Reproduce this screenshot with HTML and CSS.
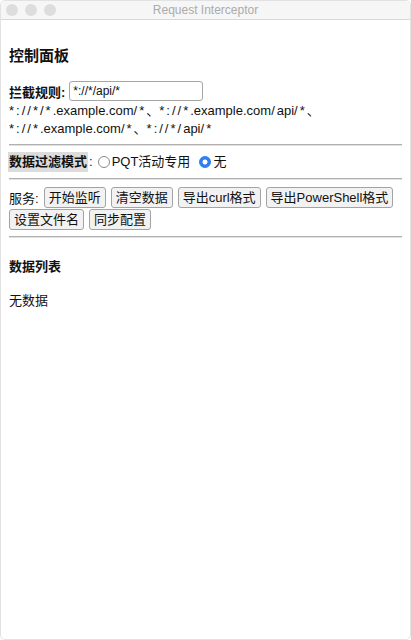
FILE: index.html
```html
<!DOCTYPE html>
<html lang="zh">
<head>
<meta charset="utf-8">
<title>Request Interceptor</title>
<link rel="stylesheet" href="styles.css">
</head>
<body>
<div class="window">
  <div class="titlebar">
    <div class="lights"><span class="light"></span><span class="light"></span><span class="light"></span></div>
    <div class="title">Request Interceptor</div>
  </div>
  <div class="content">
    <h3 class="heading">控制面板</h3>
    <div class="rule-row">
      <label class="bold">拦截规则:</label>
      <input class="rule-input" type="text" value="*://*/api/*">
    </div>
    <div class="hint"><span class="sym">*://*/*</span>.example.com<span class="sym">/*</span>、<span class="sym">*://*</span>.example.com<span class="sym">/</span>api<span class="sym">/*</span>、<br><span class="sym">*://*</span>.example.com<span class="sym">/*</span>、<span class="sym">*://*/</span>api<span class="sym">/*</span></div>
    <hr class="sep">
    <div class="filter-row">
      <span class="bold selected">数据过滤模式</span><span class="colon">:</span>
      <label class="radio-label"><span class="radio"></span>PQT活动专用</label>
      <label class="radio-label"><span class="radio checked"></span>无</label>
    </div>
    <hr class="sep">
    <div class="service-row">
      <span class="label">服务:</span>
      <button class="btn">开始监听</button>
      <button class="btn">清空数据</button>
      <button class="btn">导出curl格式</button>
      <button class="btn">导出PowerShell格式</button>
      <button class="btn">设置文件名</button>
      <button class="btn">同步配置</button>
    </div>
    <hr class="sep">
    <h4 class="subheading">数据列表</h4>
    <p class="empty">无数据</p>
  </div>
</div>
</body>
</html>
```

FILE: styles.css
```css
html, body {
  margin: 0;
  padding: 0;
  background: #ffffff;
}
body {
  width: 411px;
  height: 640px;
  overflow: hidden;
  font-family: "Liberation Sans", "Noto Sans CJK SC", sans-serif;
  font-size: 13px;
  color: #111;
}
.window {
  width: 411px;
  height: 640px;
  box-sizing: border-box;
  border-radius: 5px;
  border: 1px solid #e2e2e2;
  overflow: hidden;
  background: #fff;
}
.titlebar {
  height: 18px;
  background: #f6f6f6;
  border-bottom: 1px solid #d9d9d9;
  display: flex;
  align-items: center;
  position: relative;
}
.lights {
  display: flex;
  gap: 7px;
  padding-left: 5px;
}
.light {
  width: 12px;
  height: 12px;
  border-radius: 50%;
  background: #dddddd;
}
.title {
  position: absolute;
  left: 0;
  right: 0;
  text-align: center;
  color: #ababab;
  font-size: 12px;
  font-family: "Liberation Sans", sans-serif;
}
.content {
  padding: 8px 8px;
}
.heading {
  font-size: 15px;
  line-height: 18px;
  font-weight: bold;
  margin: 19px 0 16px;
}
.rule-row {
  display: flex;
  align-items: center;
  gap: 4px;
  height: 20px;
}
.bold { font-weight: bold; }
.rule-input {
  width: 134px;
  height: 20px;
  margin: 0;
  box-sizing: border-box;
  border: 1px solid #a6a6a6;
  border-radius: 3px;
  padding: 0 3px;
  font-family: "Liberation Sans", sans-serif;
  font-size: 12px;
  color: #111;
}
.hint {
  line-height: 18px;
  margin-top: 1px;
}
.sym {
  letter-spacing: 2px;
}
.sep {
  border: 0;
  border-top: 1px solid #b0b0b0;
  border-bottom: 1px solid #e2e2e2;
  margin: 6px 0;
}
.filter-row {
  display: flex;
  align-items: center;
  height: 20px;
  line-height: 20px;
}
.selected {
  background: #dcdcdc;
  padding: 0 1px 0 1px;
  margin-left: -1px;
}
.colon { margin-left: 1px; }
.radio-label {
  display: inline-flex;
  align-items: center;
  margin-left: 5px;
}
.radio-label + .radio-label { margin-left: 9px; }
.radio {
  width: 12px;
  height: 12px;
  box-sizing: border-box;
  border: 1px solid #8a8a8a;
  border-radius: 50%;
  margin-right: 2px;
  display: inline-block;
  background: #fff;
}
.radio.checked {
  border: 1px solid #2b7cf0;
  background: radial-gradient(circle, #ffffff 0 2.2px, #2f80f5 2.8px);
}
.service-row {
  display: flex;
  flex-wrap: wrap;
  align-items: center;
  gap: 1px 5px;
  margin-top: 7px;
}
.btn {
  font-family: "Liberation Sans", "Noto Sans CJK SC", sans-serif;
  font-size: 13px;
  height: 21px;
  margin: 0;
  padding: 0 4px;
  border: 1px solid #a3a3a3;
  border-radius: 3px;
  background: #f2f2f2;
  color: #111;
  line-height: 19px;
}
.subheading {
  font-size: 13px;
  line-height: 18px;
  font-weight: bold;
  margin: 20px 0 0;
}
.empty {
  line-height: 18px;
  margin: 16px 0 0;
}
```
